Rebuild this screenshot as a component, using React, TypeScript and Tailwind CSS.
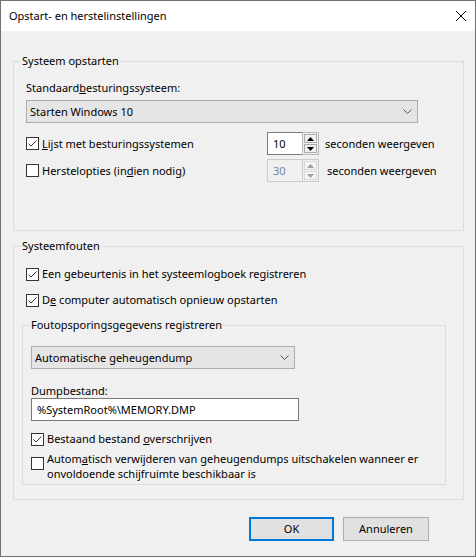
import React from 'react';

const Check = ({ checked }: { checked?: boolean }) => (
  <span className="w-[13px] h-[13px] border border-[#333333] bg-white flex items-center justify-center shrink-0">
    {checked && (
      <svg width="11" height="11" viewBox="0 0 11 11">
        <path d="M1.5 5.5 L4 8 L9.5 2.5" fill="none" stroke="#333333" strokeWidth="1" />
      </svg>
    )}
  </span>
);

const Chevron = () => (
  <svg width="9" height="5" viewBox="0 0 9 5">
    <path d="M0.5 0.5 L4.5 4.5 L8.5 0.5" fill="none" stroke="#555555" strokeWidth="1" />
  </svg>
);

const Arrow = ({ up, color }: { up?: boolean; color: string }) => (
  <svg width="7" height="4" viewBox="0 0 7 4">
    <path d={up ? 'M0 4 L3.5 0 L7 4 Z' : 'M0 0 L3.5 4 L7 0 Z'} fill={color} />
  </svg>
);

const Spinner = ({ value, disabled }: { value: string; disabled?: boolean }) => (
  <div className="flex h-[23px] w-[52px]">
    <div
      className={`w-[35px] border border-r-0 flex items-center pl-[5px] ${
        disabled ? 'border-[#cccccc] bg-[#f0f0f0] text-[#6d8bb3]' : 'border-[#7a7a7a] bg-white text-black'
      }`}
    >
      {value}
    </div>
    <div className={`w-[17px] border flex flex-col gap-[1px] p-[1px] ${disabled ? 'border-[#cccccc]' : 'border-[#b9b9b9]'}`}>
      <div className={`flex-1 border flex items-center justify-center ${disabled ? 'border-[#d9d9d9] bg-[#f4f4f4]' : 'border-[#adadad] bg-[#f0f0f0]'}`}>
        <Arrow up color={disabled ? '#a0a0a0' : '#000000'} />
      </div>
      <div className={`flex-1 border flex items-center justify-center ${disabled ? 'border-[#d9d9d9] bg-[#f4f4f4]' : 'border-[#adadad] bg-[#f0f0f0]'}`}>
        <Arrow color={disabled ? '#a0a0a0' : '#000000'} />
      </div>
    </div>
  </div>
);

const Row = ({ checked, children }: { checked?: boolean; children: React.ReactNode }) => (
  <div className="flex items-center gap-[3px] h-[16px]">
    <Check checked={checked} />
    <span>{children}</span>
  </div>
);

export default function App() {
  return (
    <div className="w-[476px] h-[557px] border border-[#707070] flex flex-col bg-[#f0f0f0] text-[11px] leading-[16px] text-black font-['Noto_Sans',sans-serif]">
      <div className="h-[30px] bg-white flex items-center justify-between pl-[8px] pr-[9px]">
        <span>Opstart- en herstelinstellingen</span>
        <svg width="10" height="10" viewBox="0 0 10 10">
          <path d="M0 0 L10 10 M10 0 L0 10" stroke="#000000" strokeWidth="1" />
        </svg>
      </div>

      <div className="pl-[12px] flex flex-col">
        <fieldset className="mt-[22px] w-[451px] h-[178px] border border-[#dcdcdc]">
          <legend className="ml-[7px] px-[1px]">Systeem opstarten</legend>
          <div className="pl-[12px] pt-[11px] flex flex-col">
            <div>
              Standaard<u>b</u>esturingssysteem:
            </div>
            <div className="mt-[4px] h-[23px] w-[392px] bg-[#e5e5e5] border border-[#adadad] flex items-center justify-between pl-[3px] pr-[5px]">
              <span>Starten Windows 10</span>
              <Chevron />
            </div>
            <div className="mt-[9px] flex items-center">
              <div className="w-[241px]">
                <Row checked>
                  <u>L</u>ijst met besturingssystemen
                </Row>
              </div>
              <Spinner value="10" />
              <span className="ml-[6px]">seconden weergeven</span>
            </div>
            <div className="mt-[4px] flex items-center">
              <div className="w-[241px]">
                <Row>
                  Herstelopties (in<u>d</u>ien nodig)
                </Row>
              </div>
              <Spinner value="30" disabled />
              <span className="ml-[8px]">seconden weergeven</span>
            </div>
          </div>
        </fieldset>

        <fieldset className="mt-[7px] w-[451px] border border-[#dcdcdc]">
          <legend className="ml-[7px] px-[1px]">Systeemfouten</legend>
          <div className="pl-[8px] pt-[12px] pb-[14px] flex flex-col">
            <div className="pl-[4px]">
              <Row checked>
                Een <u>g</u>ebeurtenis in het systeemlogboek registreren
              </Row>
            </div>
            <div className="pl-[4px] mt-[10px]">
              <Row checked>
                D<u>e</u> computer automatisch opnieuw opstarten
              </Row>
            </div>
            <fieldset className="mt-[9px] w-[424px] border border-[#dcdcdc]">
              <legend className="ml-[7px] px-[1px]">Foutopsporingsgegevens registreren</legend>
              <div className="pl-[8px] pt-[13px] pb-[3px] flex flex-col">
                <div className="h-[23px] w-[264px] bg-[#e5e5e5] border border-[#adadad] flex items-center justify-between pl-[3px] pr-[5px]">
                  <span>Automatische geheugendump</span>
                  <Chevron />
                </div>
                <div className="mt-[14px] leading-[15px]">Dumpbestand:</div>
                <div className="h-[23px] w-[268px] bg-white border border-[#7a7a7a] flex items-center pl-[5px]">
                  %SystemRoot%\MEMORY.DMP
                </div>
                <div className="mt-[10px]">
                  <Row checked>
                    Bestaand bestand <u>o</u>verschrijven
                  </Row>
                </div>
                <div className="mt-[4px] flex items-start gap-[3px]">
                  <span className="mt-[6px]">
                    <Check />
                  </span>
                  <span className="leading-[15px]">
                    Autom<u>a</u>tisch verwijderen van geheugendumps uitschakelen wanneer er
                    <br />
                    onvoldoende schijfruimte beschikbaar is
                  </span>
                </div>
              </div>
            </fieldset>
          </div>
        </fieldset>

        <div className="mt-[17px] flex justify-end gap-[9px] pr-[46px]">
          <button className="w-[85px] h-[24px] bg-[#e1e1e1] border-2 border-[#0078d7] flex items-center justify-center">
            OK
          </button>
          <button className="w-[86px] h-[24px] bg-[#e1e1e1] border border-[#adadad] flex items-center justify-center">
            Annuleren
          </button>
        </div>
      </div>
    </div>
  );
}
